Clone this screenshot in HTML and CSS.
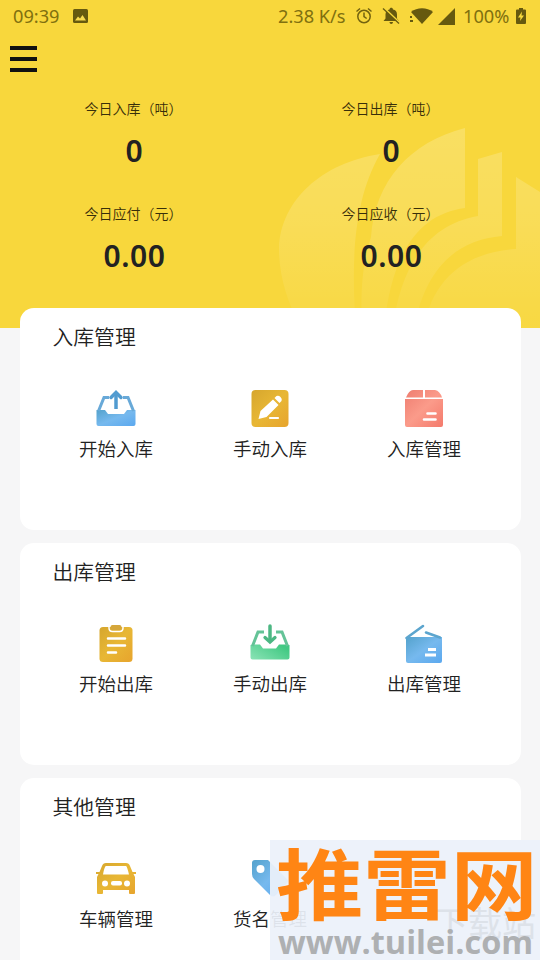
FILE: index.html
```html
<!DOCTYPE html>
<html lang="zh-CN">
<head>
<meta charset="utf-8">
<title>库存管理</title>
<link rel="stylesheet" href="styles.css">
</head>
<body>
<svg class="defs" aria-hidden="true">
  <defs>
    <linearGradient id="blue" x1="0" y1="0" x2="1" y2="1"><stop offset="0" stop-color="#54a2cc"/><stop offset=".5" stop-color="#76b9ee"/><stop offset="1" stop-color="#5ba8ef"/></linearGradient>
    <linearGradient id="gold" x1="0" y1="0" x2="1" y2="1"><stop offset="0" stop-color="#d6a62d"/><stop offset=".5" stop-color="#e8b735"/><stop offset="1" stop-color="#e7a42d"/></linearGradient>
    <linearGradient id="red" x1="0" y1="0" x2="1" y2="1"><stop offset="0" stop-color="#ee7d70"/><stop offset=".5" stop-color="#fb9b8a"/><stop offset="1" stop-color="#f47a6c"/></linearGradient>
    <linearGradient id="green" x1="0" y1="1" x2="1" y2=".4"><stop offset="0" stop-color="#8be3b6"/><stop offset="1" stop-color="#42c983"/></linearGradient>
    <linearGradient id="leaf" x1="0" y1="128" x2="0" y2="320" gradientUnits="userSpaceOnUse"><stop offset="0" stop-color="#fff" stop-opacity=".2"/><stop offset=".5" stop-color="#fff" stop-opacity=".14"/><stop offset="1" stop-color="#fff" stop-opacity=".04"/></linearGradient>
  </defs>
</svg>
<header class="hero">
  <svg class="hero-art" viewBox="270 120 270 208" fill="url(#leaf)">
    <path d="M380 154C322 163 281 200 279 248c0 30 9 55 22 80h55c-5-65-3-127 24-174z"/>
    <path d="M465 128c-55 14-90 53-94 109-8 25-11 51-9 91h22C392 250 420 214 465 208z"/>
    <path d="M478 159l24-7v84C455 240 425 270 414 328H393C400 270 425 225 478 216z"/>
    <path d="M516 177l24 15v136H424C432 280 465 252 516 249z"/>
  </svg>
  <div class="status">
    <span class="clock">09:39</span>
    <svg class="photo" width="15" height="14" viewBox="0 0 15 14"><rect width="15" height="14" rx="1.500" fill="#66590f"/><path d="M2 11.500l3-4 2 2 2.500-3.500 3.500 5.500z" fill="#f8da4e"/></svg>
    <span class="speed">2.38 K/s</span>
    <svg class="alarm" width="18" height="18" viewBox="0 0 18 18" fill="none" stroke="#72620f" stroke-width="1.500"><circle cx="9" cy="9.500" r="6.200"/><path d="M9 5.500v4l2.700 2M1.500 4.500l3.500-3M16.500 4.500l-3.500-3"/></svg>
    <svg class="bell" width="18" height="18" viewBox="0 0 18 18"><path d="M1.500 14l2-2.500V7.500c0-3 1.800-4.500 4-5C7.500 .3 11 .3 11 2.500c2.500.5 4 2 4 5v4l2 2.500zM7.500 15h3.500c0 2.500-3.500 2.500-3.500 0z" fill="#66590f"/><path d="M2.500 1.500l15 14" stroke="#f8da3c" stroke-width="1.800"/><path d="M1 1.500l16 15" stroke="#66590f" stroke-width="1.200"/></svg>
    <svg class="wifi" width="23" height="18" viewBox="0 0 23 18" fill="#66590f"><path d="M1 5C7 0 17 0 23 5L12 17z"/><path d="M0 8l4 1 2 4v4H0z" fill="#f8da3c"/><path d="M0 9h2v2H0zM0 13h3v2H0z"/></svg>
    <svg class="signal" width="17" height="17" viewBox="0 0 17 17"><path d="M17 0v17H0z" fill="#66590f"/></svg>
    <span class="percent">100%</span>
    <svg class="battery" width="10" height="16" viewBox="0 0 10 16"><path d="M3 0h4v1.500h2q1 0 1 1V15q0 1-1 1H1q-1 0-1-1V2.500q0-1 1-1h2z" fill="#66590f"/><path d="M6 3.500L2 9.500h2.500L4 13l4-5.500H5.500z" fill="#f8da3c"/></svg>
  </div>
  <div class="menu"><i></i><i></i><i></i></div>
  <div class="stats">
    <div class="stat"><span>今日入库（吨）</span><b>0</b></div>
    <div class="stat"><span>今日出库（吨）</span><b>0</b></div>
    <div class="stat"><span>今日应付（元）</span><b>0.00</b></div>
    <div class="stat"><span>今日应收（元）</span><b>0.00</b></div>
  </div>
</header>
<main class="cards">
  <section class="card">
    <h2>入库管理</h2>
    <div class="grid">
      <div class="item">
        <svg viewBox="0 0 40 40"><path d="M.5 22H9l3 4h16l3-4h8.500v14q0 2-2 2h-35q-2 0-2-2z" fill="url(#blue)"/><path d="M13 9.500H8L2.500 23M27 9.500h5l5.500 13.500" fill="none" stroke="#68a9d8" stroke-width="3"/><path d="M20 21V6" stroke="#519bd0" stroke-width="3.500"/><path d="M15 9.500l5-5 5 5" fill="none" stroke="#519bd0" stroke-width="3.500" stroke-linecap="round"/></svg>
        <span>开始入库</span></div>
      <div class="item">
        <svg viewBox="0 0 40 40"><rect x="1.500" y="2" width="37" height="37" rx="4" fill="url(#gold)"/><path d="M8.500 31l2-8L23 11.500l5.500 5.500-12 12zM24.500 10l2-2q2-1 4 1t1 4l-2 2z" fill="#fff"/><path d="M20 30h8" stroke="#fff" stroke-width="2.200" stroke-linecap="round"/></svg>
        <span>手动入库</span></div>
      <div class="item">
        <svg viewBox="0 0 40 40"><path d="M2 9.500q3-7.500 7-7.500h10v7.500zM21 2h10q5 1 7 7.500H21zM1 11h38v26q0 2-2 2H3q-2 0-2-2z" fill="url(#red)"/><path d="M23.500 25.500h8M20 31.500h11.500" stroke="#fff" stroke-width="2.600" stroke-linecap="round"/></svg>
        <span>入库管理</span></div>
    </div>
  </section>
  <section class="card">
    <h2>出库管理</h2>
    <div class="grid">
      <div class="item">
        <svg viewBox="0 0 40 40"><rect x="3.500" y="4" width="33" height="35" rx="3.500" fill="url(#gold)"/><path d="M13 3v2q0 3.500 3.500 3.500h7Q27 8.500 27 5V3" fill="none" stroke="#fff" stroke-width="1.500"/><rect x="14.500" y="2" width="11" height="5" rx="2" fill="#d5a63a"/><path d="M12 15.500h17M12 22.500h17M12 29.500h8" stroke="#fff" stroke-width="2.500" stroke-linecap="round"/></svg>
        <span>开始出库</span></div>
      <div class="item">
        <svg viewBox="0 0 40 40"><path d="M.5 22l3-.5H10l3 4h13l3-4h7l3.500.5v12.500q0 2-2 2h-35q-2 0-2-2z" fill="url(#green)"/><path d="M14 9H8L2.500 23M26 9h6l5.500 14" fill="none" stroke="#64c397" stroke-width="3"/><path d="M20 3v14" stroke="#4cb783" stroke-width="3.500" stroke-linecap="round"/><path d="M15 14.500l5 4.500 5-4.500" fill="none" stroke="#4cb783" stroke-width="3.300" stroke-linecap="round"/></svg>
        <span>手动出库</span></div>
      <div class="item">
        <svg viewBox="0 0 40 40"><path d="M2 14h36v24q0 2-2 2H4q-2 0-2-2z" fill="url(#blue)"/><path d="M2.500 15L19 3M22 9.500l14 5" stroke="#5ca5ce" stroke-width="2.600" stroke-linecap="round"/><path d="M24 26.500h8M21 32h11" stroke="#fff" stroke-width="3"/></svg>
        <span>出库管理</span></div>
    </div>
  </section>
  <section class="card">
    <h2>其他管理</h2>
    <div class="grid">
      <div class="item">
        <svg viewBox="0 0 40 40"><path fill-rule="evenodd" d="M10 5h20q3 0 4 3l2.500 6H40v2h-2.500L39 19v16q0 1-1 1h-4q-1 0-1-1v-3H7v3q0 1-1 1H2q-1 0-1-1V19l1.500-3H0v-2h3.500L6 8q1-3 4-3zm0 3q-1.500 0-3 8.500h26Q31 8 30 8z" fill="url(#gold)"/><circle cx="9" cy="25.500" r="3" fill="#fff"/><circle cx="31" cy="25.500" r="3" fill="#fff"/><rect x="15" y="23" width="11" height="4.500" rx="2" fill="#fff"/></svg>
        <span>车辆管理</span></div>
      <div class="item">
        <svg viewBox="0 0 40 40"><path d="M2 5q0-3 3-3h13l19 19q2 2 0 4L26 37q-3 3-6 0L4 21q-2-2-2-5z" fill="url(#blue)"/><circle cx="10.500" cy="11" r="4" fill="#fff"/></svg>
        <span>货名管理</span></div>
      <div class="item"></div>
    </div>
  </section>
</main>
<aside class="mark">
  <div class="ghost">下载站</div>
  <div class="name">推雷网</div>
  <div class="url">www.tuilei.com</div>
</aside>
</body>
</html>
```
FILE: styles.css
```css
* { box-sizing: border-box; }
body {
  margin: 0;
  position: relative;
  width: 540px;
  height: 960px;
  overflow: hidden;
  background: #f6f6f7;
  color: #222;
  font-family: "Noto Sans", "Noto Sans CJK SC", sans-serif;
}
svg { display: block; flex: none; }
.defs { position: absolute; width: 0; height: 0; }
.hero {
  position: relative;
  height: 328px;
  background: #f8d73c;
}
.hero-art { position: absolute; right: 0; bottom: 0; width: 270px; height: 208px; }
.status {
  position: relative;
  display: flex;
  align-items: center;
  height: 32px;
  padding: 0 14px 0 13px;
  font-size: 18.200px;
  line-height: 24px;
  color: #80700f;
  white-space: nowrap;
}
.clock { width: 60px; }
.speed { width: 77px; margin-left: 190px; }
.bell { margin-left: 9px; }
.wifi { margin-left: 10px; }
.signal { margin-left: 5px; }
.percent { margin-left: 8px; width: 46px; }
.battery { margin-left: auto; }
.menu {
  display: flex;
  flex-direction: column;
  gap: 7px;
  width: 27px;
  margin: 14px 0 0 10px;
}
.menu i { height: 4px; background: #111; }
.stats {
  position: relative;
  display: grid;
  grid-template-columns: 257px 257px;
  grid-auto-rows: 105px;
  margin: 25px 0 0 6px;
}
.stat { display: flex; flex-direction: column; align-items: center; }
.stat span {
  margin-left: -2px;
  font: 350 14px/22px "Noto Sans CJK SC", sans-serif;
  color: #382f0a;
}
.stat b {
  margin-top: 12px;
  font: 600 30px/40px "Noto Sans", sans-serif;
  letter-spacing: .6px;
}
.cards {
  position: relative;
  display: flex;
  flex-direction: column;
  gap: 13px;
  margin: -20px 19.500px 0;
}
.card {
  height: 222px;
  flex: none;
  padding: 12px 19.500px 0;
  border-radius: 14px;
  background: #fff;
}
.card h2 {
  margin: 0 0 0 13.500px;
  font: 350 20.800px/32px "Noto Sans CJK SC", sans-serif;
}
.grid { display: grid; grid-template-columns: repeat(3, 154px); margin-top: 36px; }
.item { display: flex; flex-direction: column; align-items: center; }
.item svg { width: 40px; height: 40px; }
.item span { margin-top: 6px; font: 350 18.500px/28px "Noto Sans CJK SC", sans-serif; white-space: nowrap; }
.mark {
  position: absolute;
  right: 0;
  bottom: 0;
  width: 270px;
  height: 120px;
  background: rgba(236, 241, 250, .93);
}
.name {
  position: relative;
  height: 86px;
  padding-left: 6px;
  font: 700 87.300px/90px "Noto Sans CJK SC", sans-serif;
  color: #ff8514;
  white-space: nowrap;
  transform: scaleY(.89);
  transform-origin: 0 0;
}
.url {
  position: relative;
  padding-left: 8px;
  font: 700 32.500px/32px "Open Sans", sans-serif;
  color: #aeb0b2;
}
.ghost {
  position: absolute;
  right: 4px;
  top: 60px;
  font: 400 34px/44px "Noto Sans CJK SC", sans-serif;
  color: #dde2e9;
}
```
